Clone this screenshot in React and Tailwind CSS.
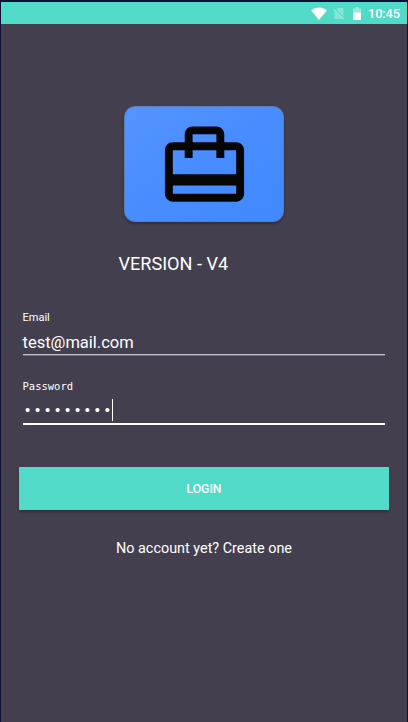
function StatusBar() {
  return (
    <div className="flex h-[22px] items-center justify-end bg-[#52dac8] pr-[7px] text-white">
      <svg className="mr-[6px] h-[13px] w-[16px]" viewBox="0 0 16 13" fill="currentColor">
        <path d="M0 3.3C2.3 1.4 5 .4 8 .4s5.700 1 8 2.900L8 13z" />
      </svg>
      <svg className="mr-[7px] h-[13px] w-[12px]" viewBox="0 0 12 13">
        <path d="M5 1h5.500v11H1.500V4.500z" fill="#fff" fillOpacity=".3" />
        <path d="M1 1.500 11.500 12" stroke="#52dac8" strokeWidth="2.200" />
        <path d="M.5 1.800 11 12.300" stroke="#fff" strokeOpacity=".4" strokeWidth="1.100" />
      </svg>
      <svg className="mr-[6px] h-[13px] w-[10px]" viewBox="0 0 10 13" fill="#fff">
        <path d="M3.500 0h3v1.500H9V6H1V1.500h2.500z" fillOpacity=".4" />
        <path d="M1 5.500h8V13H1z" />
      </svg>
      <span className="w-[32px] pt-px text-[12.800px] leading-[21px] font-medium tracking-[-0.1px]">10:45</span>
    </div>
  );
}

function Logo() {
  return (
    <div className="mt-[82px] ml-[123px] flex h-[116px] w-[160px] justify-center rounded-[11px] border border-[#5d7cba] bg-linear-to-br from-[#5494ff] via-[#488cff] to-[#4089ff] pt-[11px] shadow-[0_2px_3px_rgba(0,0,0,0.28)]">
      <svg className="h-[95px] w-[95px] shrink-0" viewBox="0 -0.130 24 24" fill="#050505">
        <path d="M20 6h-3V4c0-1.110-.89-2-2-2H9c-1.110 0-2 .89-2 2v2H4c-1.110 0-2 .89-2 2v11c0 1.110.89 2 2 2h16c1.110 0 2-.89 2-2V8c0-1.110-.89-2-2-2zM9 4h6v2H9V4zm11 15H4v-2.100h16V19zm0-4.900H4V8h3v2h2V8h6v2h2V8h3v6.100z" />
      </svg>
    </div>
  );
}

export default function App() {
  return (
    <div className="h-[722px] w-[408px] overflow-hidden border-x border-t-2 border-[#0f1033] bg-[#433f4f] font-['Roboto',sans-serif] text-white">
      <StatusBar />
      <Logo />
      <h1 className="mt-[30px] pl-[117.500px] text-[18.100px] leading-6">VERSION - V4</h1>
      <form className="px-[18px]">
        <div className="mr-[4px] ml-[3.500px] mt-[35px]">
          <label className="block text-[11px] leading-[13px]">Email</label>
          <div className="mt-[7px] h-[23px] text-[16.500px] leading-[24px]">test@mail.com</div>
          <div className="h-[2px] border-b border-[#6f6b79] bg-[#c6c4ca]" />
        </div>
        <div className="mr-[4px] ml-[3.500px] mt-[24px]">
          <label className="block font-['DejaVu_Sans_Mono',monospace] text-[10.500px] leading-[13px]">Password</label>
          <div className="mt-[6px] flex h-[22px]">
            <span className="pl-[1px] font-['DejaVu_Sans_Mono',monospace] text-[13.500px] leading-[23px] tracking-[1.850px]">•••••••••</span>
            <span className="-ml-[1.500px] h-[22px] w-[1.500px] bg-white" />
          </div>
          <div className="mt-[2px] h-[2px] bg-white" />
        </div>
        <button type="button" className="mt-[42px] block h-[43px] w-full bg-[#52dac8] pt-[2px] text-center text-[12.200px] font-medium shadow-[0_2px_2px_rgba(0,0,0,0.25)]">
          LOGIN
        </button>
      </form>
      <p className="mt-[29px] text-center text-[14.400px] leading-5">No account yet? Create one</p>
    </div>
  );
}
